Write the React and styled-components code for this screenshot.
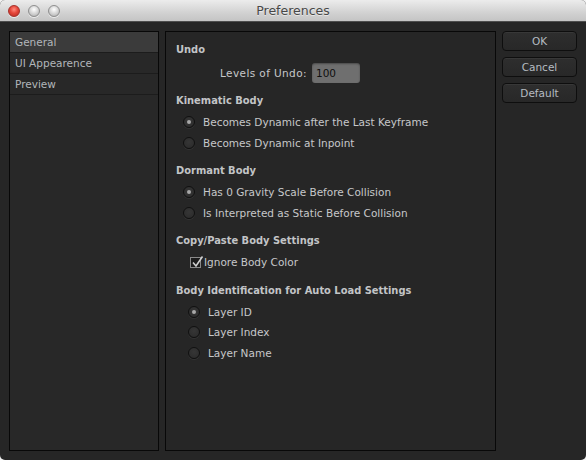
import React, { useState } from 'react';
import styled, { createGlobalStyle } from 'styled-components';

const GlobalStyle = createGlobalStyle`
  html, body {
    margin: 0;
    padding: 0;
    background: #f2f2f2;
  }
  * {
    box-sizing: border-box;
  }
`;

const Window = styled.div`
  width: 586px;
  height: 460px;
  border-radius: 5px;
  overflow: hidden;
  background: #262626;
  display: flex;
  flex-direction: column;
  font-family: "DejaVu Sans", "Liberation Sans", sans-serif;
  font-size: 10px;
`;

const TitleBar = styled.div`
  height: 22px;
  flex: none;
  display: grid;
  grid-template-columns: 1fr auto 1fr;
  align-items: center;
  background: linear-gradient(#ececec, #d2d2d2 60%, #c4c4c4);
  border-bottom: 1px solid #4e4e4e;
  padding: 0 8px;
`;

const Lights = styled.div`
  display: flex;
  gap: 8px;
`;

const Light = styled.span`
  width: 12px;
  height: 12px;
  border-radius: 50%;
  border: 1px solid ${p => (p.red ? '#a5302a' : '#8e8e8e')};
  background: ${p =>
    p.red
      ? 'radial-gradient(circle at 50% 35%, #ff8c80 0%, #e5473b 45%, #b72a22 100%)'
      : 'radial-gradient(circle at 50% 35%, #ffffff 0%, #d9d9d9 45%, #a9a9a9 100%)'};
  box-shadow: 0 1px 0 rgba(255, 255, 255, 0.6);
`;

const Title = styled.div`
  font-family: "DejaVu Sans", sans-serif;
  font-size: 12.5px;
  color: #484848;
  text-shadow: 0 1px 0 rgba(255, 255, 255, 0.5);
`;

const Body = styled.div`
  flex: 1;
  display: flex;
  gap: 6px;
  padding: 9px;
`;

const Sidebar = styled.ul`
  width: 150px;
  flex: none;
  margin: 0;
  padding: 0;
  list-style: none;
  border: 1px solid #080808;
  background: #282828;
`;

const SideItem = styled.li`
  height: 21px;
  line-height: 20px;
  padding-left: 5px;
  border-bottom: 1px solid #1c1c1c;
  color: #b2b6ba;
  font-size: 10.5px;
  background: ${p => (p.active ? '#3b3b3b' : 'transparent')};
  cursor: default;
`;

const Panel = styled.div`
  flex: 1;
  border: 1px solid #080808;
  background: #262626;
  padding: 11px 10px;
  display: flex;
  flex-direction: column;
  gap: 11px;
`;

const Section = styled.div`
  display: flex;
  flex-direction: column;
`;

const Heading = styled.div`
  height: 14px;
  line-height: 14px;
  font-family: "DejaVu Sans Condensed", "DejaVu Sans", sans-serif;
  font-weight: bold;
  font-size: 11px;
  color: #c2c4c6;
  margin-bottom: ${p => p.gap || 4}px;
`;

const FieldRow = styled.div`
  height: 20px;
  display: flex;
  align-items: center;
  gap: 5px;
  padding-left: 44px;
  color: #c6c8ca;
  font-size: 10.5px;
`;

const FieldLabel = styled.span`
  width: 87px;
  letter-spacing: 0.4px;
  white-space: nowrap;
`;

const NumberBox = styled.input`
  width: 48px;
  height: 20px;
  border: none;
  border-radius: 3px;
  background: #6f6f6f;
  box-shadow: inset 0 1px 2px rgba(0, 0, 0, 0.35);
  color: #101010;
  font-family: "DejaVu Sans", sans-serif;
  font-size: 10.5px;
  padding: 0 4px;
  outline: none;
`;

const OptionRow = styled.label`
  height: 20.5px;
  display: flex;
  align-items: center;
  gap: ${p => p.gap || 8}px;
  padding-left: ${p => p.indent}px;
  color: #c6c8ca;
  font-size: 10.5px;
  cursor: default;
`;

const Radio = styled.span`
  width: 12px;
  height: 12px;
  flex: none;
  border-radius: 50%;
  border: 1px solid #111;
  background: radial-gradient(circle at 50% 40%, #363636, #2a2a2a);
  box-shadow: 0 1px 0 rgba(255, 255, 255, 0.06);
  display: flex;
  align-items: center;
  justify-content: center;

  &::after {
    content: '';
    width: 4px;
    height: 4px;
    border-radius: 50%;
    background: ${p => (p.checked ? '#a8a8a8' : 'transparent')};
  }
`;

const CheckBox = styled.span`
  position: relative;
  width: 11px;
  height: 11px;
  flex: none;
  border: 1px solid #8a8a8a;
  background: #1c1c1c;

  svg {
    position: absolute;
    left: 0;
    top: -3px;
  }
`;

const Buttons = styled.div`
  width: 75px;
  flex: none;
  display: flex;
  flex-direction: column;
  gap: 6px;
`;

const Button = styled.button`
  height: 20px;
  border: 1px solid #0e0e0e;
  border-radius: 4px;
  background: linear-gradient(#2e2e2e, #282828);
  box-shadow: inset 0 1px 0 rgba(255, 255, 255, 0.05);
  color: #b6bcc2;
  font-family: "DejaVu Sans", sans-serif;
  font-size: 10.5px;
  padding: 0;
  cursor: default;
`;

function RadioGroup({ options, value, onChange, indent, gap }) {
  return options.map(opt => (
    <OptionRow key={opt} indent={indent} gap={gap} onClick={() => onChange(opt)}>
      <Radio checked={value === opt} />
      {opt}
    </OptionRow>
  ));
}

export default function App() {
  const [kinematic, setKinematic] = useState('Becomes Dynamic after the Last Keyframe');
  const [dormant, setDormant] = useState('Has 0 Gravity Scale Before Collision');
  const [ident, setIdent] = useState('Layer ID');
  const [ignoreColor, setIgnoreColor] = useState(true);
  const [levels, setLevels] = useState('100');

  return (
    <Window>
      <GlobalStyle />
      <TitleBar>
        <Lights>
          <Light red />
          <Light />
          <Light />
        </Lights>
        <Title>Preferences</Title>
        <div />
      </TitleBar>
      <Body>
        <Sidebar>
          <SideItem active>General</SideItem>
          <SideItem>UI Appearence</SideItem>
          <SideItem>Preview</SideItem>
        </Sidebar>
        <Panel>
          <Section>
            <Heading gap={6}>Undo</Heading>
            <FieldRow>
              <FieldLabel>Levels of Undo:</FieldLabel>
              <NumberBox value={levels} onChange={e => setLevels(e.target.value)} />
            </FieldRow>
          </Section>
          <Section>
            <Heading>Kinematic Body</Heading>
            <RadioGroup
              indent={7}
              value={kinematic}
              onChange={setKinematic}
              options={['Becomes Dynamic after the Last Keyframe', 'Becomes Dynamic at Inpoint']}
            />
          </Section>
          <Section>
            <Heading>Dormant Body</Heading>
            <RadioGroup
              indent={7}
              value={dormant}
              onChange={setDormant}
              options={['Has 0 Gravity Scale Before Collision', 'Is Interpreted as Static Before Collision']}
            />
          </Section>
          <Section>
            <Heading>Copy/Paste Body Settings</Heading>
            <OptionRow indent={14} gap={3} onClick={() => setIgnoreColor(!ignoreColor)}>
              <CheckBox>
                {ignoreColor && (
                  <svg width="13" height="13" viewBox="0 0 13 13">
                    <path d="M2 7.5 L5 11 L11.5 1.5" fill="none" stroke="#cfcfcf" strokeWidth="1.6" />
                  </svg>
                )}
              </CheckBox>
              Ignore Body Color
            </OptionRow>
          </Section>
          <Section>
            <Heading>Body Identification for Auto Load Settings</Heading>
            <RadioGroup
              indent={12}
              value={ident}
              onChange={setIdent}
              options={['Layer ID', 'Layer Index', 'Layer Name']}
            />
          </Section>
        </Panel>
        <Buttons>
          <Button>OK</Button>
          <Button>Cancel</Button>
          <Button>Default</Button>
        </Buttons>
      </Body>
    </Window>
  );
}
